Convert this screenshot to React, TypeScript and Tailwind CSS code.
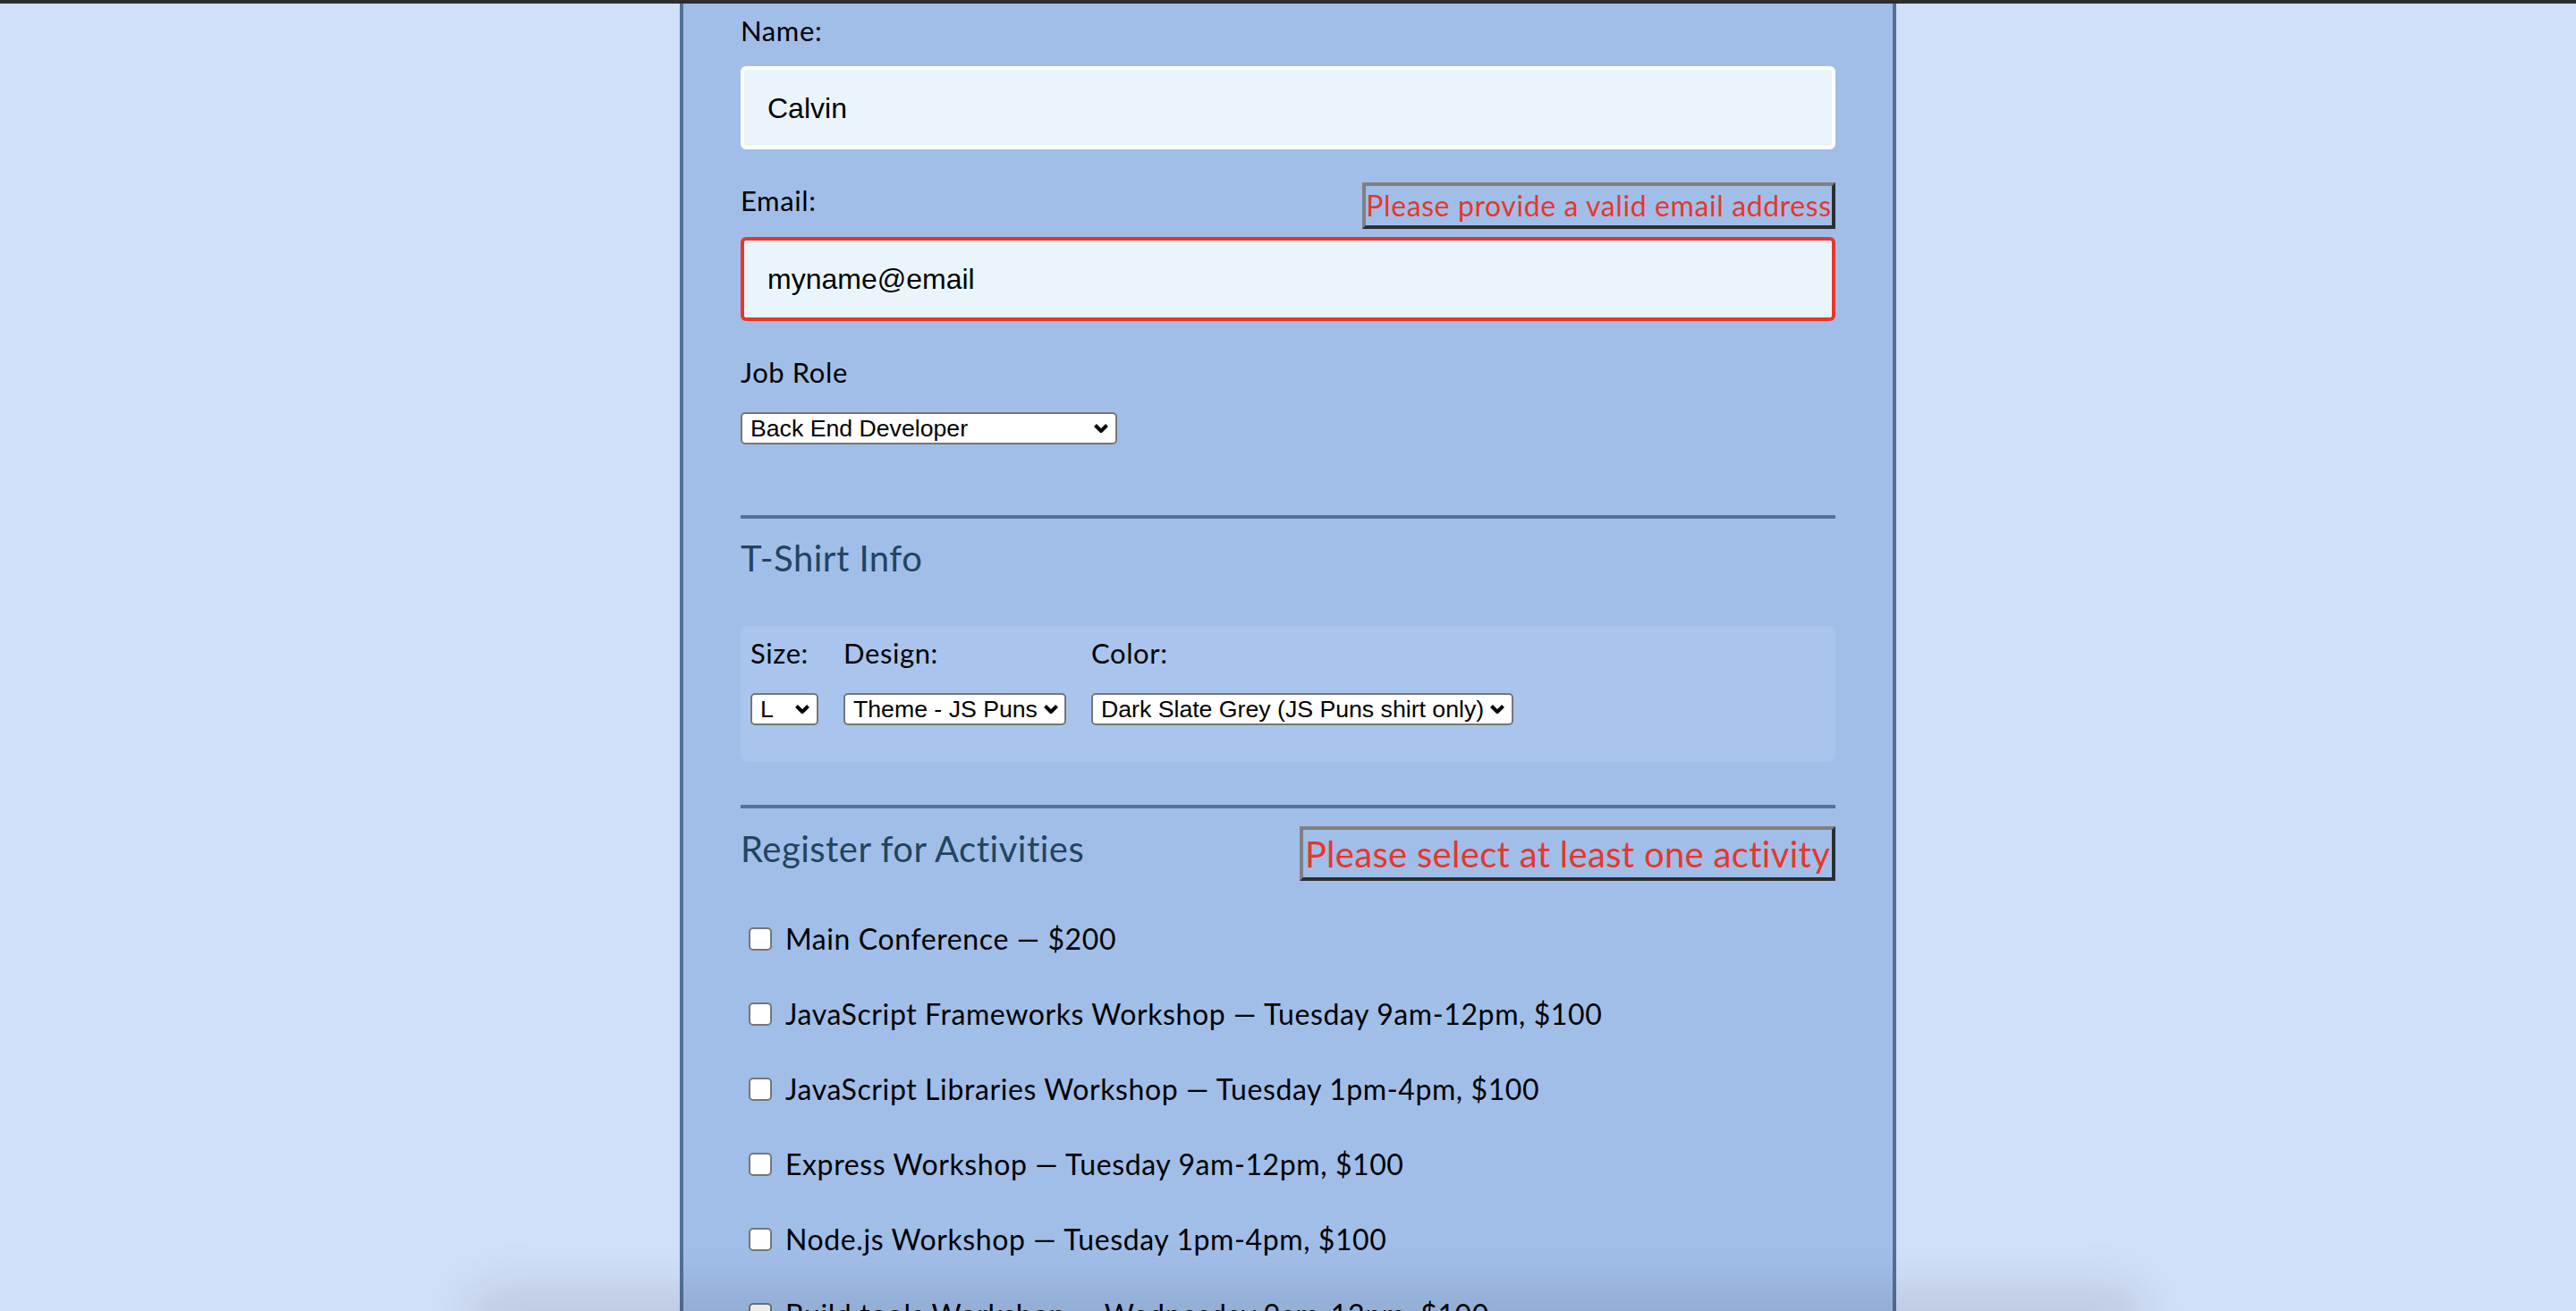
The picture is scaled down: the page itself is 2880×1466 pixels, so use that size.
import React from 'react';

const activities = [
  'Main Conference — $200',
  'JavaScript Frameworks Workshop — Tuesday 9am-12pm, $100',
  'JavaScript Libraries Workshop — Tuesday 1pm-4pm, $100',
  'Express Workshop — Tuesday 9am-12pm, $100',
  'Node.js Workshop — Tuesday 1pm-4pm, $100',
  'Build tools Workshop — Wednesday 9am-12pm, $100',
  'npm Workshop — Wednesday 1pm-4pm, $100',
];

function Chevron() {
  return (
    <svg width="18" height="12" viewBox="0 0 18 12" className="shrink-0">
      <polyline points="2.5,2.5 9,9 15.5,2.5" fill="none" stroke="#000" strokeWidth="4" strokeLinejoin="round" />
    </svg>
  );
}

function FakeSelect({ value, className }: { value: string; className: string }) {
  return (
    <div
      className={`h-[36px] flex items-center justify-between gap-[6px] pl-[9px] pr-[7px] bg-white border-2 border-[#767676] rounded-[5px] font-['Liberation_Sans',Arial,sans-serif] text-[26.67px] leading-none text-black ${className}`}
    >
      <span className="whitespace-nowrap">{value}</span>
      <Chevron />
    </div>
  );
}

function ErrorTip({ text, className }: { text: string; className: string }) {
  return (
    <div
      className={`flex items-center justify-center whitespace-nowrap border-4 border-t-[#808080] border-l-[#808080] border-b-[#2b2f33] border-r-[#2b2f33] text-[#e8362a] ${className}`}
    >
      {text}
    </div>
  );
}

export default function App() {
  return (
    <div className="relative h-[1466px] overflow-hidden bg-[#d1dff8] font-['Lato',sans-serif] text-black">
      {/* window edge */}
      <div className="h-[4px] bg-[#2c2d30]" />

      <div className="mx-auto w-[1360px] min-h-[1462px] bg-[#a1bee9] border-x-4 border-[#52729a] px-16 pt-[12px]">
        {/* basic info */}
        <div className="text-[31px] leading-[36px] tracking-[0.6px]">Name:</div>
        <div className="mt-[22px] h-[93px] flex items-center pl-[26px] bg-[#eaf5fb] border-4 border-white rounded-[6px] font-['Liberation_Sans',Arial,sans-serif] text-[32px]">
          Calvin
        </div>

        <div className="mt-[37px] flex items-start justify-between">
          <div className="mt-[2px] text-[31px] leading-[36px] tracking-[0.6px]">Email:</div>
          <ErrorTip text="Please provide a valid email address" className="h-[52px] w-[529px] text-[32px] tracking-[0.6px]" />
        </div>
        <div className="mt-[9px] h-[94px] flex items-center pl-[26px] bg-[#eaf5fb] border-4 border-[#e8362a] rounded-[6px] font-['Liberation_Sans',Arial,sans-serif] text-[32px]">
          myname@email
        </div>

        <div className="mt-[39px] text-[31px] leading-[36px] tracking-[0.6px]">Job Role</div>
        <FakeSelect value="Back End Developer" className="mt-[27px] w-[421px]" />

        <div className="mt-[79px] h-[4px] bg-[#52729a]" />

        {/* t-shirt */}
        <h2 className="mt-[20px] text-[40px] leading-[48px] tracking-[0.5px] text-[#23445f]">T-Shirt Info</h2>
        <div className="mt-[52px] flex items-start gap-[28px] rounded-[8px] bg-[#a9c5ed] pl-[11px] pt-[12px] pb-[41px]">
          <div>
            <div className="text-[31px] leading-[36px] tracking-[0.6px]">Size:</div>
            <FakeSelect value="L" className="mt-[27px] w-[76px]" />
          </div>
          <div>
            <div className="text-[31px] leading-[36px] tracking-[0.6px]">Design:</div>
            <FakeSelect value="Theme - JS Puns" className="mt-[27px] w-[249px]" />
          </div>
          <div>
            <div className="text-[31px] leading-[36px] tracking-[0.6px]">Color:</div>
            <FakeSelect value="Dark Slate Grey (JS Puns shirt only)" className="mt-[27px] w-[472px]" />
          </div>
        </div>

        <div className="mt-[48px] h-[4px] bg-[#52729a]" />

        {/* activities */}
        <div className="mt-[20px] flex items-start justify-between">
          <h2 className="mt-[1px] text-[40px] leading-[48px] tracking-[0.5px] text-[#23445f]">Register for Activities</h2>
          <ErrorTip text="Please select at least one activity" className="h-[61px] w-[599px] text-[40px] tracking-[0.3px]" />
        </div>
        <div className="mt-[23px]">
          {activities.map((a) => (
            <label key={a} className="h-[84px] flex items-center pl-[9px]">
              <span className="w-[26px] h-[26px] shrink-0 rounded-[5px] border-2 border-[#767676] bg-white" />
              <span className="ml-[15px] text-[32px] leading-[38px] tracking-[0.6px] whitespace-nowrap">{a}</span>
            </label>
          ))}
        </div>
      </div>

      {/* soft shadow at the bottom edge */}
      <div className="pointer-events-none absolute bottom-[-34px] left-[520px] right-[480px] h-[60px] rounded-full bg-black/10 blur-[26px]" />
    </div>
  );
}
